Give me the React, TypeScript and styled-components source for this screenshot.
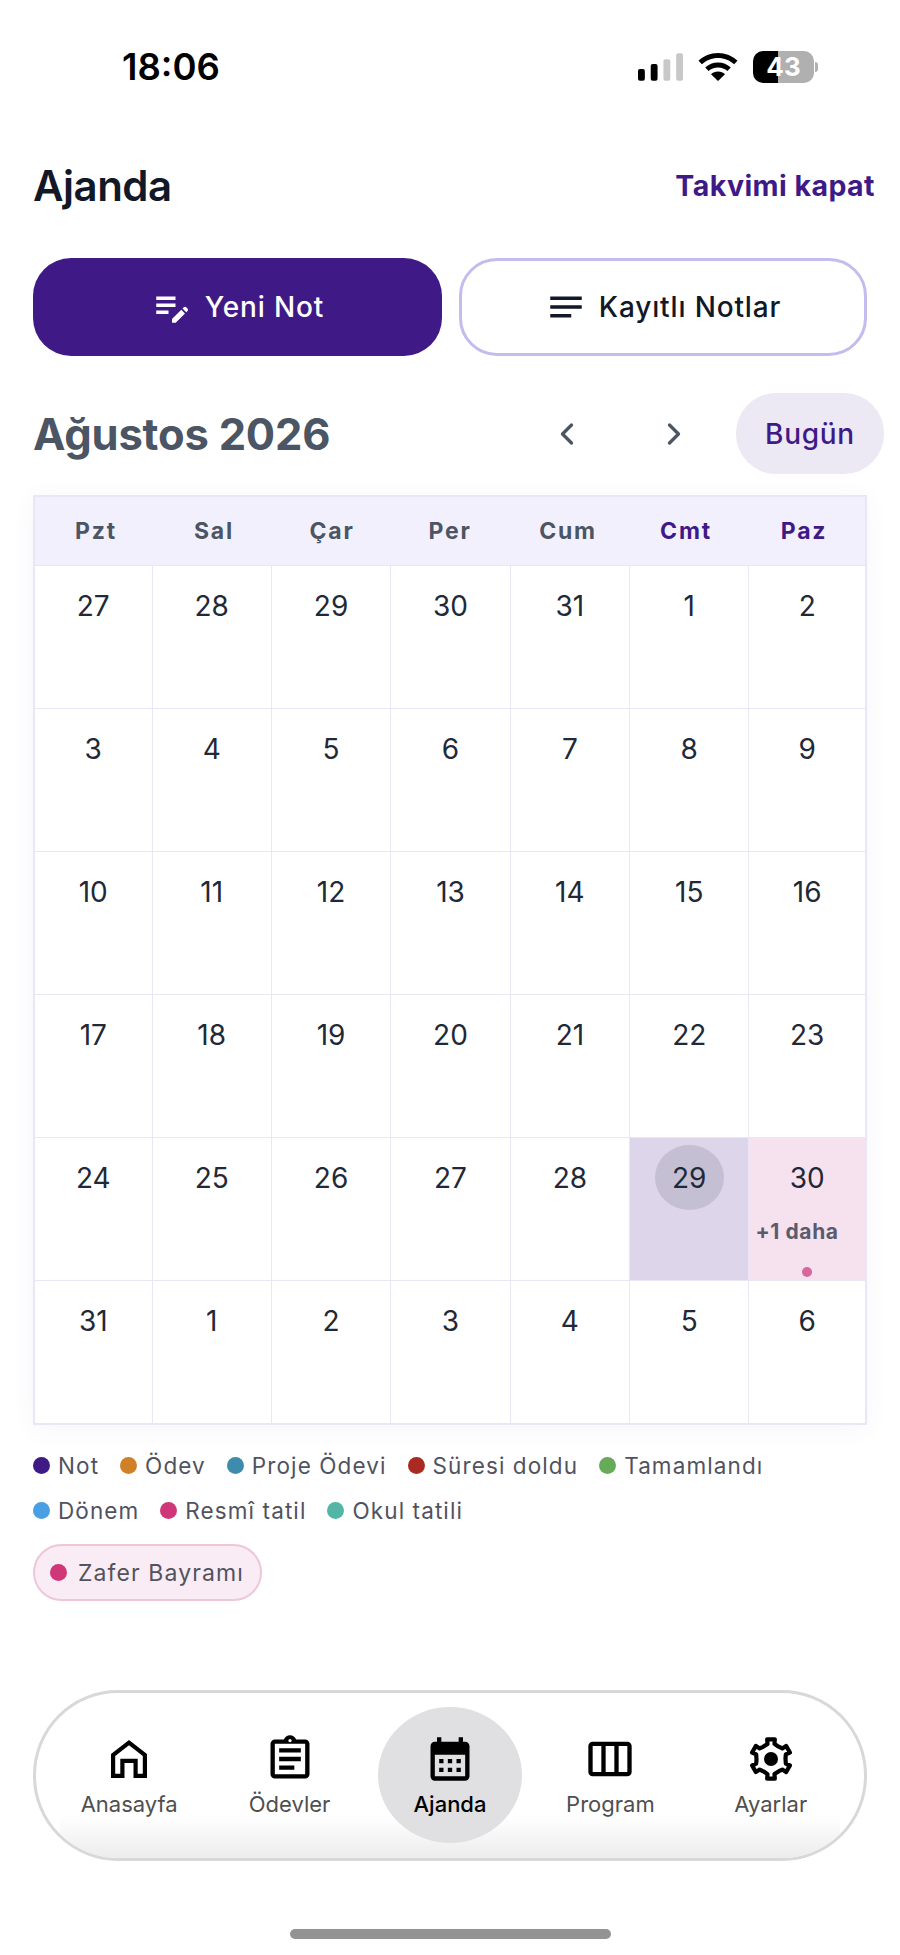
import React from "react";
import styled, { createGlobalStyle } from "styled-components";
import { MdEditNote, MdNotes, MdOutlineAssignment, MdCalendarMonth, MdOutlineViewWeek } from "react-icons/md";
import { ChevronLeft, ChevronRight } from "lucide-react";

const PURPLE = "#3f1a87";

const GlobalStyle = createGlobalStyle`
  html, body { margin: 0; padding: 0; background: #fff; }
  body { font-family: Inter, "Noto Sans", sans-serif; }
  * { box-sizing: border-box; }
`;

const Page = styled.div`
  width: 900px;
  height: 1955px;
  display: flex;
  flex-direction: column;
  padding: 0 33px;
  overflow: hidden;
  background: #fff;
`;

const StatusBar = styled.div`
  height: 161px;
  display: flex;
  justify-content: space-between;
  padding: 48px 53px 0 89px;
  align-items: flex-start;
`;

const Time = styled.div`
  font-size: 36.5px;
  line-height: 38px;
  font-weight: 600;
  color: #000;
`;

const StatusIcons = styled.div`
  display: flex;
  align-items: center;
  gap: 15px;
  padding-top: 3px;
`;

const Battery = styled.div`
  width: 61px;
  height: 32px;
  border-radius: 10px;
  background: linear-gradient(90deg, #000 41%, #b0b0b0 41%);
  color: #fff;
  font-size: 26px;
  font-weight: 700;
  line-height: 32px;
  text-align: center;
  position: relative;
  &::after {
    content: "";
    position: absolute;
    right: -4px;
    top: 11px;
    width: 3px;
    height: 10px;
    border-radius: 0 3px 3px 0;
    background: #b0b0b0;
  }
`;

const HeaderRow = styled.div`
  display: flex;
  justify-content: space-between;
  align-items: center;
  height: 48px;
  margin-bottom: 49px;
`;

const Title = styled.h1`
  margin: 0;
  font-size: 42px;
  font-weight: 600;
  color: #111827;
  letter-spacing: -0.5px;
`;

const TextLink = styled.div`
  font-size: 28.5px;
  font-weight: 700;
  letter-spacing: 0.45px;
  color: ${PURPLE};
  margin-right: -8px;
`;

const Actions = styled.div`
  display: grid;
  grid-template-columns: 409px 408px;
  justify-content: space-between;
  margin-bottom: 37px;
`;

const ActionButton = styled.button<{ $primary?: boolean }>`
  height: 98px;
  border-radius: 38px;
  display: flex;
  align-items: center;
  justify-content: center;
  gap: 12px;
  font-family: inherit;
  font-size: 28px;
  font-weight: 500;
  letter-spacing: 0.85px;
  background: ${(p) => (p.$primary ? PURPLE : "#fff")};
  color: ${(p) => (p.$primary ? "#fff" : "#111827")};
  border: ${(p) => (p.$primary ? "none" : "3px solid #c6bbef")};
`;

const MonthRow = styled.div`
  display: flex;
  align-items: center;
  height: 81px;
  margin-right: -17px;
  margin-bottom: 21px;
`;

const MonthTitle = styled.h2`
  margin: 0;
  flex: 1;
  font-size: 43.5px;
  font-weight: 700;
  letter-spacing: -0.2px;
  color: #4b5563;
`;

const NavButton = styled.div`
  width: 107px;
  display: flex;
  justify-content: center;
  color: #4b5563;
`;

const TodayButton = styled.div`
  width: 148px;
  height: 81px;
  margin-left: 9px;
  border-radius: 40px;
  background: #ece8f4;
  color: ${PURPLE};
  font-size: 28px;
  font-weight: 500;
  letter-spacing: 0.7px;
  display: flex;
  align-items: center;
  justify-content: center;
`;

const Calendar = styled.div`
  border: 2px solid #e9e6f8;
  box-shadow: 0 4px 24px rgba(80, 60, 160, 0.05);
`;

const WeekHeader = styled.div`
  display: grid;
  grid-template-columns: repeat(7, 1fr);
  height: 68px;
  padding: 0 2px;
  background: #f3f0fd;
`;

const WeekDay = styled.div<{ $weekend?: boolean }>`
  display: flex;
  align-items: center;
  justify-content: center;
  font-size: 23px;
  font-weight: 700;
  letter-spacing: 1.8px;
  color: ${(p) => (p.$weekend ? PURPLE : "#4b5563")};
`;

const Grid = styled.div`
  display: grid;
  grid-template-columns: 117.5px repeat(5, 119.4px) 1fr;
  grid-auto-rows: 143px;
`;

const Cell = styled.div<{ $tint?: string; $last?: boolean }>`
  position: relative;
  display: flex;
  flex-direction: column;
  align-items: center;
  padding-top: 7px;
  border-top: 1px solid #e9e7f7;
  border-right: ${(p) => (p.$last ? "none" : "1px solid #e9e7f7")};
  background: ${(p) => p.$tint || "#fff"};
`;

const DayNumber = styled.div<{ $today?: boolean }>`
  width: 69px;
  height: 65px;
  border-radius: 50%;
  display: flex;
  align-items: center;
  justify-content: center;
  font-size: 28px;
  color: #1f2937;
  background: ${(p) => (p.$today ? "#c4bfd2" : "transparent")};
`;

const MoreLabel = styled.div`
  align-self: flex-start;
  padding-left: 6px;
  margin-top: 9px;
  font-size: 21px;
  font-weight: 700;
  letter-spacing: 0.6px;
  color: #5b5b6e;
  white-space: nowrap;
`;

const EventDot = styled.span`
  position: absolute;
  left: 50%;
  bottom: 3px;
  margin-left: -5px;
  width: 10px;
  height: 10px;
  border-radius: 50%;
  background: #d8669f;
`;

const Legend = styled.div`
  display: flex;
  flex-wrap: wrap;
  gap: 15px 21px;
  margin-top: 25px;
  width: 780px;
`;

const LegendItem = styled.div`
  display: flex;
  align-items: center;
  gap: 8px;
  height: 30px;
  font-size: 22.5px;
  letter-spacing: 1.1px;
  color: #52525f;
`;

const Dot = styled.span<{ $color: string }>`
  width: 17px;
  height: 17px;
  border-radius: 50%;
  background: ${(p) => p.$color};
  flex: none;
`;

const HolidayPill = styled.div`
  align-self: flex-start;
  margin-top: 19px;
  height: 57px;
  padding: 0 16px 0 15px;
  display: flex;
  align-items: center;
  gap: 11px;
  border-radius: 29px;
  background: #f9ecf4;
  border: 2px solid #eec6d8;
  font-size: 23px;
  letter-spacing: 1.1px;
  color: #52525f;
`;

const TabBar = styled.nav`
  position: relative;
  margin-top: 89px;
  height: 171px;
  border: 3px solid #d8d8d8;
  border-radius: 85px;
  display: grid;
  grid-template-columns: repeat(5, 1fr);
  padding: 14px 13px;
  background: #fff;
  overflow: hidden;
  &::after {
    content: "";
    position: absolute;
    left: 24px;
    right: 24px;
    bottom: 0;
    height: 42px;
    background: linear-gradient(180deg, rgba(238, 238, 238, 0), #ececec);
    pointer-events: none;
  }
`;

const Tab = styled.div<{ $active?: boolean }>`
  justify-self: center;
  width: 144px;
  height: 136px;
  border-radius: 50%;
  padding-top: 26px;
  display: flex;
  flex-direction: column;
  align-items: center;
  background: ${(p) => (p.$active ? "#e0e0e2" : "transparent")};
  color: #000;
  font-size: 22px;
  font-weight: ${(p) => (p.$active ? 500 : 400)};
  z-index: 1;
  & span {
    margin-top: 4px;
    line-height: 30px;
    color: ${(p) => (p.$active ? "#000" : "#4f4f4f")};
  }
`;

const IconSlot = styled.div`
  width: 52px;
  height: 52px;
  display: flex;
  align-items: center;
  justify-content: center;
`;

const HomeIndicator = styled.div`
  align-self: center;
  margin-top: 68px;
  width: 321px;
  height: 10px;
  border-radius: 5px;
  background: #939393;
`;

const SignalIcon = () => (
  <svg width="45" height="28" viewBox="0 0 46 28">
    <rect x="0" y="16" width="7" height="12" rx="2" fill="#000" />
    <rect x="13" y="11" width="7" height="17" rx="2" fill="#000" />
    <rect x="26" y="6" width="7" height="22" rx="2" fill="#c8c8c8" />
    <rect x="39" y="0" width="7" height="28" rx="2" fill="#c8c8c8" />
  </svg>
);

const WifiIcon = () => (
  <svg width="40" height="28" viewBox="0 0 40 28">
    <path d="M20 0C12.5 0 5.6 2.9.5 7.7l3.4 3.6C8 7.3 13.7 4.9 20 4.9s12 2.4 16.1 6.4l3.4-3.6C34.4 2.9 27.5 0 20 0z" fill="#000" />
    <path d="M20 9.4c-5 0-9.4 1.9-12.8 5l3.4 3.6c2.4-2.2 5.7-3.6 9.4-3.6s7 1.4 9.4 3.6l3.4-3.6c-3.4-3.1-7.800-5-12.8-5z" fill="#000" />
    <path d="M20 18.600c-2.800 0-5.200 1-7 2.700L20 28l7-6.700c-1.800-1.700-4.200-2.700-7-2.700z" fill="#000" />
  </svg>
);

const HomeIcon = () => (
  <svg width="36" height="38" viewBox="0 0 36 38">
    <path
      fillRule="evenodd"
      d="M18 0L36 14V38H22.500V23H13.500V38H0V14L18 0ZM18 5.200L4.200 15.900V33.800H9.300V18.800H26.700V33.800H31.800V15.900L18 5.200Z"
      fill="#000"
    />
  </svg>
);

// six teeth, flat tips, top tooth pointing straight up
const gearPath = () => {
  const pts: string[] = [];
  for (let t = 0; t < 6; t++) {
    const a = -90 + t * 60;
    [
      [a - 33, 14.5],
      [a - 13, 15.5],
      [a - 11, 20],
      [a + 11, 20],
      [a + 13, 15.5],
    ].forEach(([deg, r]) => {
      const rad = (deg * Math.PI) / 180;
      pts.push(`${(22 + r * Math.cos(rad)).toFixed(2)} ${(22 + r * Math.sin(rad)).toFixed(2)}`);
    });
  }
  return `M${pts.join("L")}Z`;
};

const GearIcon = () => (
  <svg width="44" height="44" viewBox="0 0 44 44">
    <path d={gearPath()} fill="none" stroke="#000" strokeWidth="4.2" strokeLinejoin="round" />
    <circle cx="22" cy="22" r="7" fill="#000" />
  </svg>
);

const WEEK = ["Pzt", "Sal", "Çar", "Per", "Cum", "Cmt", "Paz"];

const DAYS = [
  27, 28, 29, 30, 31, 1, 2,
  3, 4, 5, 6, 7, 8, 9,
  10, 11, 12, 13, 14, 15, 16,
  17, 18, 19, 20, 21, 22, 23,
  24, 25, 26, 27, 28, 29, 30,
  31, 1, 2, 3, 4, 5, 6,
];

const LEGEND = [
  { label: "Not", color: "#3f1a87" },
  { label: "Ödev", color: "#d08028" },
  { label: "Proje Ödevi", color: "#3d8bad" },
  { label: "Süresi doldu", color: "#a92a20" },
  { label: "Tamamlandı", color: "#66ac58" },
  { label: "Dönem", color: "#4a9fe2" },
  { label: "Resmî tatil", color: "#cf3778" },
  { label: "Okul tatili", color: "#52b5a5" },
];

const TODAY_INDEX = 33;
const HOLIDAY_INDEX = 34;

export default function App() {
  return (
    <Page>
      <GlobalStyle />
      <StatusBar>
        <Time>18:06</Time>
        <StatusIcons>
          <SignalIcon />
          <WifiIcon />
          <Battery>43</Battery>
        </StatusIcons>
      </StatusBar>

      <HeaderRow>
        <Title>Ajanda</Title>
        <TextLink>Takvimi kapat</TextLink>
      </HeaderRow>

      <Actions>
        <ActionButton $primary>
          <MdEditNote size={42} />
          Yeni Not
        </ActionButton>
        <ActionButton>
          <MdNotes size={42} />
          Kayıtlı Notlar
        </ActionButton>
      </Actions>

      <MonthRow>
        <MonthTitle>Ağustos 2026</MonthTitle>
        <NavButton>
          <ChevronLeft size={36} strokeWidth={2.2} />
        </NavButton>
        <NavButton>
          <ChevronRight size={36} strokeWidth={2.2} />
        </NavButton>
        <TodayButton>Bugün</TodayButton>
      </MonthRow>

      <Calendar>
        <WeekHeader>
          {WEEK.map((d, i) => (
            <WeekDay key={d} $weekend={i > 4}>
              {d}
            </WeekDay>
          ))}
        </WeekHeader>
        <Grid>
          {DAYS.map((d, i) => (
            <Cell
              key={i}
              $last={i % 7 === 6}
              $tint={i === TODAY_INDEX ? "#ddd5ea" : i === HOLIDAY_INDEX ? "#f6e2ef" : undefined}
            >
              <DayNumber $today={i === TODAY_INDEX}>{d}</DayNumber>
              {i === HOLIDAY_INDEX && (
                <>
                  <MoreLabel>+1 daha</MoreLabel>
                  <EventDot />
                </>
              )}
            </Cell>
          ))}
        </Grid>
      </Calendar>

      <Legend>
        {LEGEND.map((l) => (
          <LegendItem key={l.label}>
            <Dot $color={l.color} />
            {l.label}
          </LegendItem>
        ))}
      </Legend>

      <HolidayPill>
        <Dot $color="#cf3778" />
        Zafer Bayramı
      </HolidayPill>

      <TabBar>
        <Tab>
          <IconSlot>
            <HomeIcon />
          </IconSlot>
          <span>Anasayfa</span>
        </Tab>
        <Tab>
          <IconSlot>
            <MdOutlineAssignment size={52} />
          </IconSlot>
          <span>Ödevler</span>
        </Tab>
        <Tab $active>
          <IconSlot>
            <MdCalendarMonth size={52} />
          </IconSlot>
          <span>Ajanda</span>
        </Tab>
        <Tab>
          <IconSlot>
            <MdOutlineViewWeek size={52} />
          </IconSlot>
          <span>Program</span>
        </Tab>
        <Tab>
          <IconSlot>
            <GearIcon />
          </IconSlot>
          <span>Ayarlar</span>
        </Tab>
      </TabBar>

      <HomeIndicator />
    </Page>
  );
}
